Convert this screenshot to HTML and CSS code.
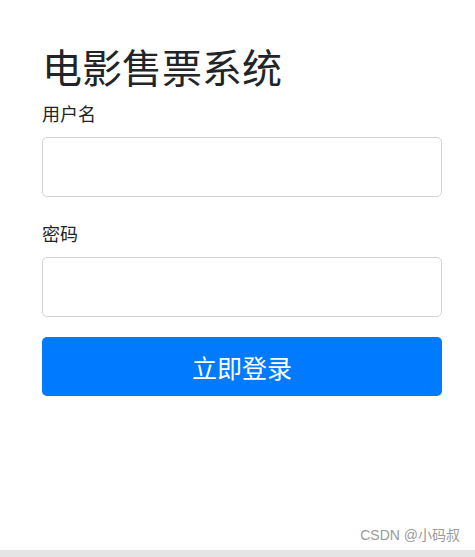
FILE: index.html
```html
<!DOCTYPE html>
<html lang="zh">
<head>
<meta charset="utf-8">
<title>电影售票系统</title>
<link rel="stylesheet" href="styles.css">
</head>
<body>
<main class="page">
  <form class="login">
    <h1 class="title">电影售票系统</h1>
    <label class="label" for="user">用户名</label>
    <input class="field" id="user" type="text">
    <label class="label label-second" for="pwd">密码</label>
    <input class="field" id="pwd" type="password">
    <button class="submit" type="button">立即登录</button>
  </form>
  <div class="watermark">CSDN @小码叔</div>
</main>
<div class="bottom-bar"></div>
</body>
</html>
```
FILE: styles.css
```css
* { box-sizing: border-box; }
html, body { margin: 0; padding: 0; height: 100%; }
body {
  display: flex;
  flex-direction: column;
  font-family: "Noto Sans CJK SC", "Noto Sans", sans-serif;
  color: #212529;
  background: #fff;
}
.page {
  flex: 1;
  position: relative;
}
.login {
  display: flex;
  flex-direction: column;
  width: 400px;
  margin-left: 42px;
  padding-top: 42px;
}
.title {
  margin: 0 0 10px;
  font-size: 40px;
  line-height: 48px;
  font-weight: 400;
  color: #212529;
}
.label {
  font-size: 18px;
  line-height: 27px;
  margin-bottom: 10px;
  color: #212529;
}
.label-second { margin-top: 23px; }
.field {
  height: 60px;
  border: 1px solid #ced4da;
  border-radius: 5px;
  background: #fff;
  font-size: 18px;
  padding: 0 12px;
  outline: none;
}
.submit {
  margin-top: 20px;
  height: 59px;
  border: none;
  border-radius: 5px;
  background: #007bff;
  color: #fff;
  font-family: "Noto Sans CJK SC", "Noto Sans", sans-serif;
  font-size: 25px;
  cursor: pointer;
}
.watermark {
  position: absolute;
  right: 15px;
  bottom: 6px;
  font-family: "Liberation Sans", "Noto Sans CJK SC", sans-serif;
  font-size: 14px;
  color: #9a9a9a;
}
.bottom-bar {
  height: 7px;
  background: #e5e5e5;
}
```
